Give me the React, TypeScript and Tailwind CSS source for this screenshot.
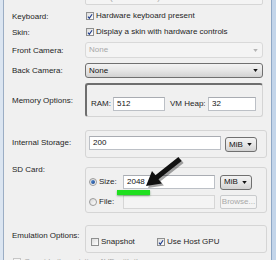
import React from "react";

const FONT = "font-['Liberation_Sans',Arial,sans-serif]";

function Label({ children, className = "" }: { children: React.ReactNode; className?: string }) {
  return (
    <div className={`w-[81px] shrink-0 pl-[8px] text-[8px] leading-[9px] text-[#1e1e1e] ${className}`}>
      {children}
    </div>
  );
}

function Check({ checked }: { checked?: boolean }) {
  return (
    <span className="w-[8px] h-[8px] shrink-0 border border-[#8e8f8f] bg-gradient-to-br from-[#dcdcdc] to-white flex items-center justify-center">
      {checked && (
        <svg viewBox="0 0 8 8" className="w-[7px] h-[7px]">
          <path d="M1.3 4.1 L3.1 6.3 L6.8 1" stroke="#1f3d8c" strokeWidth="1.5" fill="none" />
        </svg>
      )}
    </span>
  );
}

function Radio({ checked }: { checked?: boolean }) {
  return (
    <span className="w-[8px] h-[8px] shrink-0 rounded-full border border-[#9a9a9a] bg-gradient-to-br from-[#d8d8d8] to-white flex items-center justify-center">
      {checked && <span className="w-[4px] h-[4px] rounded-full bg-gradient-to-br from-[#5c94d8] to-[#17428a]" />}
    </span>
  );
}

function Arrow({ disabled }: { disabled?: boolean }) {
  return (
    <svg viewBox="0 0 6 4" className="w-[5px] h-[3px] shrink-0">
      <path d="M0 0 H6 L3 4 Z" fill={disabled ? "#b4b4b4" : "#111"} />
    </svg>
  );
}

function Combo({
  text,
  w,
  disabled,
  className = "",
}: {
  text: string;
  w: string;
  disabled?: boolean;
  className?: string;
}) {
  return (
    <div
      className={`${w} ${className} shrink-0 flex items-center justify-between pl-[3px] pr-[4px] rounded-[3px] border text-[8px] leading-none ${
        disabled
          ? "border-[#d9d9d9] bg-[#f4f4f4] text-[#a8a8a8]"
          : "border-[#707070] bg-gradient-to-b from-[#f3f3f3] via-[#e6e6e6] to-[#d2d2d2] text-[#111]"
      }`}
    >
      <span>{text}</span>
      <Arrow disabled={disabled} />
    </div>
  );
}

function Field({ value, w, disabled, className = "" }: { value?: string; w: string; disabled?: boolean; className?: string }) {
  return (
    <div
      className={`${w} ${className} shrink-0 h-[14px] flex items-center pl-[3px] text-[8px] leading-none border ${
        disabled
          ? "border-[#d6d6d6] bg-[#f4f4f4] text-[#a8a8a8]"
          : "border-[#bcc0c6] border-t-[#a9acb2] bg-white text-[#111]"
      }`}
    >
      {value}
    </div>
  );
}

function Group({ className = "", dark, children }: { className?: string; dark?: boolean; children: React.ReactNode }) {
  return (
    <div
      className={`${className} shrink-0 border rounded-[3px] ${
        dark ? "border-[#d4d4d4] border-t-[#6e6e6e] border-l-[#6e6e6e] border-t-2 border-l-2" : "border-[#d5d5d5]"
      }`}
    >
      {children}
    </div>
  );
}

export default function App() {
  return (
    <div className={`relative w-[276px] h-[260px] overflow-hidden bg-[#f0f0f0] flex items-start ${FONT}`}>
      {/* window frame left */}
      <div className="w-[4px] h-[260px] shrink-0 bg-[#dbe5f1] border-r border-[#9badc4]" />

      <div className="flex-1 flex flex-col -mt-[10px] *:shrink-0">
        {/* CPU/ABI */}
        <div className="flex items-center h-[15px]">
          <Label>CPU/ABI:</Label>
          <div className="w-[178px] h-[15px] flex items-center pl-[4px] border border-[#d6d6d6] rounded-[2px] bg-[#f4f4f4] text-[8px] text-[#a8a8a8]">
            ARM (armeabi-v7a)
          </div>
        </div>

        {/* Keyboard */}
        <div className="flex items-center h-[16px] mt-[3px]">
          <Label>Keyboard:</Label>
          <div className="flex items-center gap-[2px] ml-[1px] text-[8px] text-[#1e1e1e]">
            <Check checked />
            <span>Hardware keyboard present</span>
          </div>
        </div>

        {/* Skin */}
        <div className="flex items-center h-[16px]">
          <Label>Skin:</Label>
          <div className="flex items-center gap-[2px] ml-[1px] text-[8px] text-[#1e1e1e]">
            <Check checked />
            <span>Display a skin with hardware controls</span>
          </div>
        </div>

        {/* Front camera */}
        <div className="flex items-center h-[16px] mt-[2px]">
          <Label>Front Camera:</Label>
          <Combo text="None" w="w-[178px]" className="h-[16px]" disabled />
        </div>

        {/* Back camera */}
        <div className="flex items-center h-[15px] mt-[5px]">
          <Label>Back Camera:</Label>
          <Combo text="None" w="w-[178px]" className="h-[15px]" />
        </div>

        {/* Memory options */}
        <div className="flex mt-[5px]">
          <Label className="pt-[13px]">Memory Options:</Label>
          <Group dark className="w-[178px] h-[34px] pt-[12px] pl-[4px] flex items-start text-[8px] text-[#1e1e1e]">
            <div className="flex items-center h-[14px]">
              <span className="w-[22px]">RAM:</span>
              <Field value="512" w="w-[52px]" />
              <span className="ml-[5px] w-[38px]">VM Heap:</span>
              <Field value="32" w="w-[48px]" />
            </div>
          </Group>
        </div>

        {/* Internal storage */}
        <div className="flex mt-[13px]">
          <Label className="pt-[8px]">Internal Storage:</Label>
          <Group className="w-[182px] h-[28px] pl-[3px] pt-[5px] flex items-start">
            <Field value="200" w="w-[132px]" />
            <Combo text="MiB" w="w-[32px]" className="h-[15px] ml-[4px] mt-[1px]" />
          </Group>
        </div>

        {/* SD card */}
        <div className="flex mt-[9px]">
          <Label className="-mt-[2px]">SD Card:</Label>
          <Group className="w-[182px] h-[46px] pl-[3px] pt-[7px] flex flex-col gap-[6px] text-[8px] text-[#1e1e1e]">
            <div className="flex items-center h-[14px]">
              <Radio checked />
              <span className="ml-[2px] w-[24px]">Size:</span>
              <Field value="2048" w="w-[92px]" />
              <Combo text="MiB" w="w-[32px]" className="h-[15px] ml-[5px]" />
            </div>
            <div className="flex items-center h-[14px]">
              <Radio />
              <span className="ml-[2px] w-[24px]">File:</span>
              <Field w="w-[92px]" disabled />
              <div className="ml-[5px] w-[37px] h-[14px] flex items-center justify-center rounded-[2px] border border-[#c9cbcd] bg-[#f4f4f4] text-[#a8a8a8]">
                Browse...
              </div>
            </div>
          </Group>
        </div>

        {/* Emulation options */}
        <div className="flex mt-[12px]">
          <Label className="pt-[6px]">Emulation Options:</Label>
          <Group className="w-[182px] h-[28px] pl-[5px] pt-[10px] flex items-start text-[8px] text-[#1e1e1e]">
            <div className="flex items-center gap-[2px] w-[66px]">
              <Check />
              <span>Snapshot</span>
            </div>
            <div className="flex items-center gap-[2px]">
              <Check checked />
              <span>Use Host GPU</span>
            </div>
          </Group>
        </div>

        {/* Override */}
        <div className="flex items-center gap-[3px] mt-[3px] ml-[9px] h-[12px] text-[8px] text-[#a8a8a8]">
          <span className="w-[8px] h-[8px] border border-[#c6c6c6] bg-[#f6f6f6]" />
          <span>Override the existing AVD with the same name</span>
        </div>
      </div>

      {/* window frame right */}
      <div className="w-[5px] h-[260px] shrink-0 bg-[#c3d5ea] border-l border-[#8ea7c6]" />

      {/* annotation: green underline */}
      <div className="absolute left-[117px] top-[190px] w-[33px] h-[5px] bg-[#1fe01f] shadow-[0_1px_2px_rgba(0,90,0,0.5)]" />

      {/* annotation: arrow */}
      <svg className="absolute left-0 top-0 w-[276px] h-[260px] pointer-events-none" viewBox="0 0 276 260">
        <polygon
          points="180.4,159 157.4,177.3 154,173 148,188 163.9,185.6 160.5,181.2 183.6,163"
          fill="#000"
          opacity="0.35"
        />
        <polygon
          points="178.4,157 155.4,175.3 152,171 146,186 161.9,183.6 158.5,179.2 181.6,161"
          fill="#111"
        />
      </svg>
    </div>
  );
}
